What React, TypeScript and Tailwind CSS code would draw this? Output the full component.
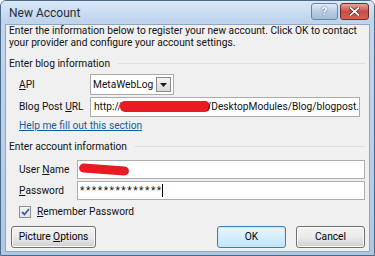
import React from 'react';

const font = { fontFamily: 'Roboto, "Liberation Sans", sans-serif' };

const Btn: React.FC<{ children: React.ReactNode; primary?: boolean; className?: string }> = ({ children, primary, className }) => (
  <div
    className={`h-[22px] shrink-0 whitespace-nowrap flex items-center justify-center rounded-[3px] border text-black ${
      primary
        ? 'border-[#3c7fb1] bg-gradient-to-b from-[#eaf6fd] to-[#bee6fd] shadow-[inset_0_0_0_1px_#c8e8fb]'
        : 'border-[#707070] bg-gradient-to-b from-[#f2f2f2] via-[#ebebeb] to-[#cfcfcf] shadow-[inset_0_0_0_1px_#fcfcfc]'
    } ${className ?? ''}`}
  >
    <span>{children}</span>
  </div>
);

const Section: React.FC<{ title: string }> = ({ title }) => (
  <div className="flex items-center h-[13px]">
    <span className="pr-2 whitespace-nowrap">{title}</span>
    <div className="flex-1 h-px bg-[#d5dfe5]" />
  </div>
);

export default function App() {
  return (
    <div
      style={font}
      className="w-[375px] h-[256px] flex flex-col bg-gradient-to-b from-[#c3d7ee] via-[#b9d1ea] to-[#aec8e4] border border-[#4b6a8a] rounded-t-[6px] overflow-hidden text-[10.2px] text-[#111] leading-[12px]"
    >
      {/* title bar */}
      <div className="h-[22px] shrink-0 flex items-center justify-between pl-[8px] pr-[5px] bg-gradient-to-b from-[#dae8f6] to-[#bcd3ec]">
        <span className="text-[12px] text-[#1e2c3c] pt-[2px]">New Account</span>
        <div className="flex items-start gap-[2px] self-start mt-[2px]">
          <div className="w-[27px] h-[17px] rounded-[3px] border border-[#6a84a3] bg-gradient-to-b from-[#e2ecf6] via-[#b7cde4] to-[#a3bdd9] flex items-center justify-center text-[11px] font-bold text-[#fff] [text-shadow:0_0_2px_#2d4f78]">
            ?
          </div>
          <div className="w-[29px] h-[17px] rounded-[3px] border border-[#6d2a2a] bg-gradient-to-b from-[#e8a39a] via-[#c74d44] to-[#d2624f] flex items-center justify-center">
            <svg width="11" height="9" viewBox="0 0 11 9">
              <path d="M1.5 1 L9.5 8 M9.5 1 L1.5 8" stroke="#4a1010" strokeWidth="3" strokeLinecap="square" />
              <path d="M1.5 1 L9.5 8 M9.5 1 L1.5 8" stroke="#fff" strokeWidth="1.8" strokeLinecap="square" />
            </svg>
          </div>
        </div>
      </div>

      {/* client area */}
      <div className="flex-1 mx-[4px] mb-[3px] mt-[1px] bg-[#f0f0f0] border border-[#8ea6c0] flex flex-col pl-[3px] pr-[4px]">
        <div className="whitespace-nowrap">
          <p>Enter the information below to register your new account. Click OK to contact</p>
          <p>your provider and configure your account settings.</p>
        </div>

        <div className="mt-[8px]">
          <Section title="Enter blog information" />
        </div>

        <div className="pl-[10px] mt-[3px] flex flex-col">
          <div className="flex items-center h-[23px]">
            <span className="w-[71px] whitespace-nowrap"><u>A</u>PI</span>
            <div className="w-[84px] h-[21px] bg-white border border-[#acacac] flex items-center justify-between pl-[2px] pr-[2px]">
              <span className="whitespace-nowrap">MetaWebLog</span>
              <div className="w-[15px] h-[15px] border border-[#8a8a8a] bg-gradient-to-b from-[#f4f4f4] to-[#d8d8d8] flex items-center justify-center">
                <svg width="7" height="4" viewBox="0 0 7 4"><path d="M0 0 H7 L3.5 4 Z" fill="#1a1a1a" /></svg>
              </div>
            </div>
          </div>
          <div className="flex items-center h-[21px]">
            <span className="w-[71px] whitespace-nowrap">Blog Post <u>U</u>RL</span>
            <div className="w-[270px] h-[20px] bg-white border border-[#acacac] flex items-center pl-[3px] whitespace-nowrap overflow-hidden">
              <span>http://</span>
              <span className="inline-block w-[96px] h-[11px] bg-[#e81b23] rounded-[5px] -ml-[2px] -mr-[3px]" />
              <span>/DesktopModules/Blog/blogpost.</span>
            </div>
          </div>
          <div className="mt-[3px] whitespace-nowrap">
            <span className="text-[#0b5ea8] underline">Help me fill out this section</span>
          </div>
        </div>

        <div className="mt-[8px]">
          <Section title="Enter account information" />
        </div>

        <div className="pl-[10px] mt-[7px] flex flex-col gap-[2px]">
          <div className="flex items-center h-[19px]">
            <span className="w-[58px] whitespace-nowrap">User <u>N</u>ame</span>
            <div className="flex-1 h-[19px] bg-white border border-[#acacac] flex items-center pl-[1px]">
              <span className="inline-block w-[50px] h-[9px] bg-[#e81b23] rounded-[5px] rotate-[4deg]" />
            </div>
          </div>
          <div className="flex items-center h-[19px]">
            <span className="w-[58px] whitespace-nowrap"><u>P</u>assword</span>
            <div className="flex-1 h-[19px] bg-white border border-[#acacac] flex items-center pl-[2px]">
              <span className="text-[10px] tracking-[1.6px] whitespace-nowrap">**************</span>
              <span className="w-px h-[13px] bg-black -ml-[1px]" />
            </div>
          </div>
        </div>

        <div className="pl-[10px] mt-[6px] flex items-center gap-[6px]">
          <div className="w-[12px] h-[12px] border border-[#8f8f8f] bg-gradient-to-b from-[#f4f4f4] to-[#e2e2e2] flex items-center justify-center">
            <svg width="9" height="8" viewBox="0 0 9 8"><path d="M1 4 L3.5 6.5 L8 1" stroke="#3a5f9a" strokeWidth="1.8" fill="none" /></svg>
          </div>
          <span className="whitespace-nowrap"><u>R</u>emember Password</span>
        </div>

        <div className="mt-auto mb-[3px] flex items-center pl-[2px]">
          <Btn className="w-[85px]">Picture <u>O</u>ptions</Btn>
          <div className="flex-1" />
          <Btn primary className="w-[69px]">OK</Btn>
          <Btn className="w-[69px] ml-[10px]">Cancel</Btn>
        </div>
      </div>
    </div>
  );
}
